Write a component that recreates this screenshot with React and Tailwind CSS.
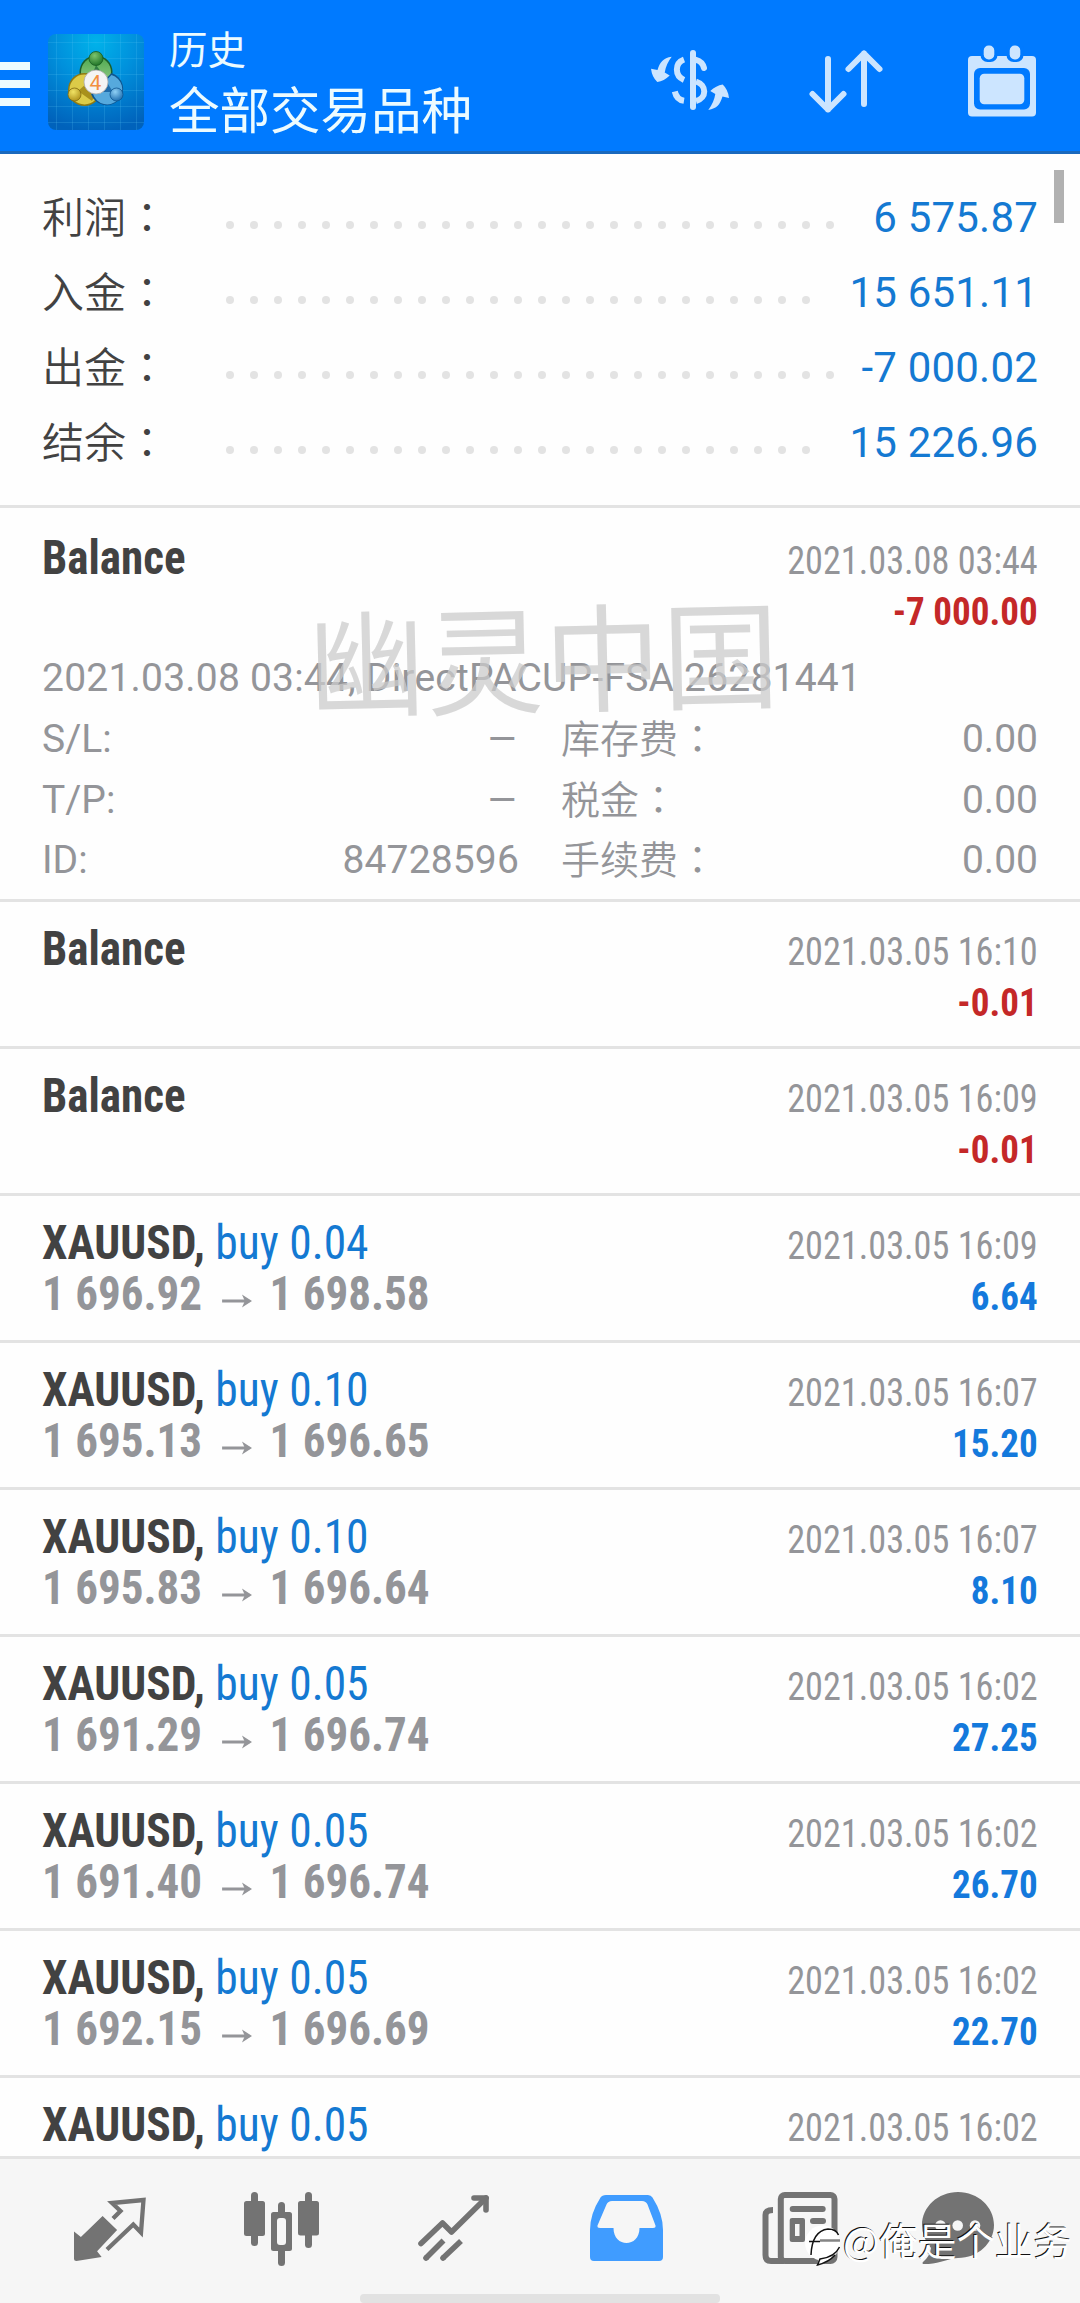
import React from "react";

const SANS = "font-['Roboto','Noto_Sans_CJK_SC',sans-serif]";
const COND = "font-['Roboto_Condensed','Roboto',sans-serif] font-stretch-75%";

const summary = [
  ["利润", "6 575.87", 26],
  ["入金", "15 651.11", 25],
  ["出金", "-7 000.02", 26],
  ["结余", "15 226.96", 25],
];

const details = [
  ["S/L:", "–", "库存费", "0.00"],
  ["T/P:", "–", "税金", "0.00"],
  ["ID:", "84728596", "手续费", "0.00"],
];

const balances = [
  ["2021.03.05 16:10", "-0.01"],
  ["2021.03.05 16:09", "-0.01"],
];

const trades = [
  ["0.04", "1 696.92", "1 698.58", "2021.03.05 16:09", "6.64"],
  ["0.10", "1 695.13", "1 696.65", "2021.03.05 16:07", "15.20"],
  ["0.10", "1 695.83", "1 696.64", "2021.03.05 16:07", "8.10"],
  ["0.05", "1 691.29", "1 696.74", "2021.03.05 16:02", "27.25"],
  ["0.05", "1 691.40", "1 696.74", "2021.03.05 16:02", "26.70"],
  ["0.05", "1 692.15", "1 696.69", "2021.03.05 16:02", "22.70"],
  ["0.05", null, null, "2021.03.05 16:02", null],
];

function Colon() {
  return <span className="font-['Noto_Sans_CJK_TC',sans-serif]" lang="zh-TW">：</span>;
}

function AppLogo() {
  const lines = [8.5, 24.5, 40.5, 56.5, 72.5, 88.5];
  return (
    <svg className="ml-[18px] mt-[34px] h-24 w-24 shrink-0" viewBox="0 0 96 96">
      <defs>
        <radialGradient id="bg" cx="48" cy="8" r="90" gradientUnits="userSpaceOnUse">
          <stop offset="0" stopColor="#00b2ea" />
          <stop offset="0.45" stopColor="#0090dc" />
          <stop offset="1" stopColor="#0062bb" />
        </radialGradient>
        <radialGradient id="green" cx="0.4" cy="0.3" r="0.8">
          <stop offset="0" stopColor="#7cc46c" />
          <stop offset="1" stopColor="#156b20" />
        </radialGradient>
        <radialGradient id="gold" cx="0.4" cy="0.3" r="0.8">
          <stop offset="0" stopColor="#f0e264" />
          <stop offset="1" stopColor="#a98a14" />
        </radialGradient>
        <radialGradient id="blue" cx="0.4" cy="0.3" r="0.8">
          <stop offset="0" stopColor="#8fd0f5" />
          <stop offset="1" stopColor="#1263a8" />
        </radialGradient>
        <linearGradient id="greenRing" x1="0" y1="0" x2="0" y2="1">
          <stop offset="0" stopColor="#4fa850" />
          <stop offset="1" stopColor="#9bd08c" />
        </linearGradient>
      </defs>
      <rect width="96" height="96" rx="8" fill="url(#bg)" />
      <g stroke="#5cc8f5" strokeOpacity="0.2" strokeWidth="1">
        {lines.map((p) => (
          <path key={p} d={`M${p} 0V96M0 ${p}H96`} />
        ))}
      </g>
      <circle cx="48" cy="38" r="16.500" fill="#1c5f2a" />
      <circle cx="48" cy="38" r="15" fill="url(#greenRing)" />
      <path d="M48 31L56 42L52 52H40Z" fill="#2f7d42" />
      <circle cx="36.500" cy="55.500" r="16.500" fill="#8f7a12" />
      <circle cx="36.500" cy="55.500" r="15" fill="#dccb48" />
      <path d="M30 57L38 50L48 60L44 67Z" fill="#a8901c" />
      <path d="M63.500 39A16.500 16.500 0 1 1 43 60Z" fill="#0f5590" />
      <path d="M63.500 41A15 15 0 1 1 45 60Z" fill="#56a9dd" />
      <path d="M54 58L60 50L65 58Z" fill="#1f6cab" />
      <circle cx="48" cy="24.500" r="7" fill="url(#green)" stroke="#165a20" strokeWidth="0.800" />
      <circle cx="26.500" cy="60.500" r="6.500" fill="url(#gold)" stroke="#806a10" strokeWidth="0.800" />
      <circle cx="68.500" cy="60.500" r="6.500" fill="url(#blue)" stroke="#0f5590" strokeWidth="0.800" />
      <circle cx="48" cy="48" r="12" fill="#f4f4f4" stroke="#a9a9a9" strokeWidth="0.800" />
      <text x="47.500" y="55.500" textAnchor="middle" fontSize="21" fontFamily="Roboto" fill="#f28f40">4</text>
    </svg>
  );
}

function Header() {
  return (
    <header className="flex h-[154px] shrink-0 items-start border-b-[3px] border-[#1a69bd] bg-[#007aff]">
      <div className="mt-[62px] flex w-[30px] shrink-0 flex-col gap-[10px]">
        <div className="h-2 bg-[#ecfbff]" />
        <div className="h-2 bg-[#ecfbff]" />
        <div className="h-2 bg-[#ecfbff]" />
      </div>
      <AppLogo />
      <div className={`ml-[25px] w-[420px] text-[#ecfbff] ${SANS}`}>
        <div className="mt-[22px] h-[58px] text-[38.500px] leading-[58px]">历史</div>
        <div className="-mt-px h-[64px] text-[50.500px] leading-[65px]">全部交易品种</div>
      </div>
      <svg className="ml-[61px] mt-[50px] h-[60px] w-[80px] shrink-0" viewBox="650 50 80 60">
        <g fill="none" stroke="#cce5ff" strokeWidth="6">
          <path d="M693 53V107" strokeLinecap="round" />
          <path d="M684 59.5C674.5 63 674.5 76 684 80" />
          <path d="M674.8 91.5C676 97 679 100 684 100.800" />
          <path d="M696 59.8Q702.500 61.500 704 68" strokeLinecap="round" />
          <path d="M696 81.500C707 85 707 98 696 101" />
        </g>
        <g fill="#cce5ff">
          <path id="swap" d="M671.700 56.700C663 58 660 62 657.500 70L651 68.700Q652 77 657.300 82Q664 81 669.700 75.500L664.700 72.500Q666 64 671.700 56.700Z" />
          <use href="#swap" transform="rotate(180 690 83.300)" />
        </g>
      </svg>
      <svg className="ml-[79px] mt-[49px] h-[65px] w-[75px] shrink-0" viewBox="809 49 75 65">
        <g fill="none" stroke="#cce5ff" strokeWidth="6" strokeLinecap="round" strokeLinejoin="round">
          <path d="M828 59V109.500M812.500 94L828 109.500L843.500 94" />
          <path d="M864 104V53.500M848.500 69L864 53.500L879.500 69" />
        </g>
      </svg>
      <svg className="ml-[84px] mt-[45px] h-[72px] w-[68px] shrink-0" viewBox="968 45 68 72">
        <rect x="968" y="56" width="68" height="60.500" rx="4" fill="#cce5ff" />
        <rect x="974" y="68" width="56" height="41.500" rx="6" fill="#007aff" />
        <rect x="979.700" y="73.700" width="44.600" height="30.500" rx="4.500" fill="#cce5ff" />
        <rect x="980.500" y="42" width="17" height="20" rx="7" fill="#007aff" />
        <rect x="1006.500" y="42" width="17" height="20" rx="7" fill="#007aff" />
        <rect x="983.700" y="45.500" width="10.600" height="14" rx="5" fill="#cce5ff" />
        <rect x="1009.700" y="45.500" width="10.600" height="14" rx="5" fill="#cce5ff" />
      </svg>
    </header>
  );
}

function Summary() {
  return (
    <section className="relative h-[354px] shrink-0 border-b-[3px] border-[#e3e3e3] pt-[26px]">
      {summary.map(([label, value, dots]) => (
        <div key={label} className={`flex h-[75px] pl-[42px] pr-[42px] text-[42px] leading-[75px] ${SANS}`}>
          <div className="-mt-[3px] w-[184px] shrink-0 font-[350] text-[#424242]">{label}<Colon /></div>
          <div className="flex gap-[16.500px] pt-[41px]">
            {Array.from({ length: dots }, (_, i) => (
              <i key={i} className="h-[7.500px] w-[7.500px] shrink-0 rounded-full bg-[#e3e3e3]" />
            ))}
          </div>
          <div className="ml-auto whitespace-nowrap tracking-[0.200px] text-[#1479d2]">{value}</div>
        </div>
      ))}
      <div className="absolute right-4 top-4 h-[53px] w-[10px] bg-[#b1b1b1]" />
    </section>
  );
}

function Stamp({ date, amount, color }) {
  return (
    <div className={`pt-[25px] text-right text-[39px] leading-[51px] ${COND}`}>
      <div className="origin-right scale-x-[0.929] text-[#949599]">{date}</div>
      {amount && <div className={`origin-right scale-x-[0.950] font-bold ${color}`}>{amount}</div>}
    </div>
  );
}

function OpenBalance() {
  return (
    <section className="relative h-[394px] shrink-0 border-b-[3px] border-[#e3e3e3] pl-[42px] pr-[42px] pt-[3px]">
      <div className="flex h-[136px] justify-between">
        <div className={`origin-left scale-x-[0.938] pt-[21px] text-[48px] font-bold leading-[51px] text-[#424242] ${COND}`}>Balance</div>
        <Stamp date="2021.03.08 03:44" amount="-7 000.00" color="text-[#c42828]" />
      </div>
      <div className={`pt-px text-[39px] leading-[61px] text-[#949599] ${SANS}`}>
        <div className="h-[61px] whitespace-nowrap tracking-[0.210px]">2021.03.08 03:44, DirectPACUP-FSA 26281441</div>
        {details.map(([a, b, c, d]) => (
          <div key={a} className="flex h-[60.600px]">
            <div className="flex w-[477px] justify-between">
              <span>{a}</span>
              <span className={b === "–" ? "inline-block origin-right scale-x-[1.250]" : "tracking-[0.150px]"}>{b}</span>
            </div>
            <div className="ml-[42px] flex grow justify-between">
              <span className="-mt-[3px] font-[350]">{c}<Colon /></span>
              <span>{d}</span>
            </div>
          </div>
        ))}
      </div>
      <div className="absolute left-[308px] top-[65px] rotate-[-1.300deg] whitespace-nowrap font-['Noto_Sans_CJK_SC',sans-serif] text-[117px] leading-[160px] tracking-[1px] text-[#cbcbcb]/75">
        幽灵中国
      </div>
    </section>
  );
}

function Row({ children, stamp }) {
  return (
    <section className="flex h-[147px] shrink-0 justify-between border-b-[3px] border-[#e3e3e3] pl-[42px] pr-[42px]">
      <div className={`pt-[21px] text-[48px] leading-[51px] ${COND}`}>{children}</div>
      {stamp}
    </section>
  );
}

function Arrow() {
  return (
    <svg className="ml-[21.500px] mr-[18.500px] mt-[26px] h-[14px] w-[32px]" viewBox="0 0 31 14" preserveAspectRatio="none">
      <path d="M0 7H28" stroke="#949599" strokeWidth="3" />
      <path d="M20.500 0.500L31 7L20.500 13.500L23.500 7Z" fill="#949599" />
    </svg>
  );
}

function NavBar() {
  return (
    <nav className="relative flex h-[147px] shrink-0 items-start border-t-[3px] border-[#e3e3e3] bg-[#f6f6f6]">
      <svg className="ml-[74px] mt-[38px] h-[66px] w-[73px]" viewBox="74 2197 73 66">
        <path d="M102.600 2216L117.100 2230L97.100 2251.300L101.600 2257L76.400 2261Q74 2261 74 2259V2231.500L80.900 2237Z" fill="#737373" />
        <path d="M113 2218.500L120.500 2211L112 2203L143.500 2200L141 2232.500L133.300 2224.500L107 2249.500" fill="none" stroke="#737373" strokeWidth="4.300" />
      </svg>
      <svg className="ml-[97px] mt-[33px] h-[74px] w-[75px]" viewBox="244 2192 75 74">
        <g fill="#737373">
          <rect x="251" y="2192" width="7" height="54" rx="3.500" />
          <rect x="244" y="2201" width="21" height="35" rx="2.500" />
          <rect x="278" y="2202" width="7" height="64" rx="3.500" />
          <rect x="271" y="2212" width="21" height="39" rx="2.500" />
          <rect x="305" y="2192" width="7" height="56" rx="3.500" />
          <rect x="298" y="2201" width="21" height="34.500" rx="2.500" />
        </g>
        <rect x="277" y="2218" width="9" height="27" rx="3" fill="#f6f6f6" />
      </svg>
      <svg className="ml-[98px] mt-[35px] h-[68px] w-[73px]" viewBox="417 2194 73 68">
        <g fill="none" stroke="#737373" strokeWidth="5.600" strokeLinecap="round" strokeLinejoin="round">
          <path d="M421 2243.500L442.500 2223L451.500 2232L486 2198" />
          <path d="M474 2198H486V2210" />
        </g>
        <g fill="none" stroke="#737373" strokeWidth="5.600">
          <path d="M426 2258L443.500 2240.500M443 2258L461 2241" />
          <path d="M426 2258L426.100 2257.900M443 2258L443.100 2257.900" strokeLinecap="round" />
        </g>
      </svg>
      <svg className="ml-[100px] mt-[36px] h-[66px] w-[73px]" viewBox="590 2195 73 66">
        <path d="M606 2195H648Q651 2195 652.500 2197.500Q663 2214 663 2230V2257Q663 2261 659 2261H594Q590 2261 590 2257V2230Q590 2214 600.500 2197.500Q602 2195 606 2195ZM612 2201Q608 2201 606.500 2204.500L597.500 2225.500Q597 2228 600 2228H613.500C613.500 2248 639.500 2248 639.500 2228H653Q656 2228 655.500 2225.500L647.500 2204.500Q646 2201 642 2201Z" fill="#409cff" fillRule="evenodd" />
      </svg>
      <svg className="ml-[99px] mt-[33px] h-[72px] w-[76px]" viewBox="762 2192 76 72">
        <path d="M784 2261H771Q765.500 2261 765.500 2255V2215Q765.500 2210 773 2210" fill="none" stroke="#737373" strokeWidth="6" />
        <rect x="780.800" y="2195" width="53.700" height="66" rx="4" fill="none" stroke="#737373" strokeWidth="6" />
        <g fill="#737373">
          <rect x="789.700" y="2206" width="36" height="6" rx="3" />
          <rect x="810" y="2218" width="16" height="6" rx="3" />
          <rect x="810" y="2238" width="16" height="4" rx="2" />
          <path fillRule="evenodd" d="M792 2218H803Q805 2218 805 2220V2240Q805 2242 803 2242H792Q789.700 2242 789.700 2240V2220Q789.700 2218 792 2218ZM795 2224V2236H799.500V2224Z" />
        </g>
      </svg>
      <svg className="ml-[84px] mt-[33px] h-[72px] w-[72px]" viewBox="922 2192 72 72">
        <path d="M958 2192C978 2192 994 2207 994 2225S978 2258 958 2258C949 2258 937 2265 923 2264Q922 2263 923 2262Q930 2256 931 2248Q922 2238 922 2225C922 2207 938 2192 958 2192Z" fill="#737373" />
        <g fill="#f6f6f6">
          <circle cx="940.500" cy="2225.500" r="5.300" />
          <circle cx="957.700" cy="2225.500" r="5.300" />
          <circle cx="975" cy="2225.500" r="5.300" />
        </g>
      </svg>
      <div className="absolute bottom-0 left-[360px] h-[9px] w-[360px] rounded-[4px] bg-[#e2e2e2]" />
      <div className="absolute left-[804px] top-[57px] flex items-start text-white">
        <svg className="mt-[5px] h-[46px] w-[38px]" viewBox="804 2221 38 46">
          <circle cx="822.500" cy="2243" r="17.500" fill="#fff" />
          <path d="M837 2252Q829 2263 817 2266L819 2257Z" fill="#fff" />
          <path d="M820 2240.500H840" stroke="#858585" strokeWidth="2.500" />
          <path d="M809 2241.500H820M811 2255Q812 2231 828 2229Q836 2229 838.500 2235M839.500 2247Q835 2257 820 2259L817.500 2265Q829 2262 835 2255" fill="none" stroke="#111" strokeWidth="1.500" />
        </svg>
        <div className="whitespace-nowrap pl-px font-['Noto_Sans_CJK_SC',sans-serif] text-[38.500px] leading-[46px] [text-shadow:-1px_-1px_0_#111]">@俺是个业务</div>
      </div>
    </nav>
  );
}

export default function App() {
  return (
    <div className="flex h-[2303px] w-[1080px] flex-col overflow-hidden bg-[#fefefe]">
      <Header />
      <main className="flex h-[2002px] shrink-0 flex-col overflow-hidden">
        <Summary />
        <OpenBalance />
        {balances.map(([date, amount]) => (
          <Row key={date} stamp={<Stamp date={date} amount={amount} color="text-[#c42828]" />}>
            <div className="origin-left scale-x-[0.938] font-bold text-[#424242]">Balance</div>
          </Row>
        ))}
        {trades.map(([lot, from, to, date, profit], i) => (
          <Row key={i} stamp={<Stamp date={date} amount={profit} color="text-[#1479dc]" />}>
            <div className="origin-left scale-x-[0.948] whitespace-nowrap text-[#1479d2]">
              <span className="font-bold text-[#424242]">XAUUSD,</span> buy {lot}
            </div>
            {from && (
              <div className="flex origin-left scale-x-[0.938] font-bold text-[#949599]">
                <span>{from}</span>
                <Arrow />
                <span>{to}</span>
              </div>
            )}
          </Row>
        ))}
      </main>
      <NavBar />
    </div>
  );
}
